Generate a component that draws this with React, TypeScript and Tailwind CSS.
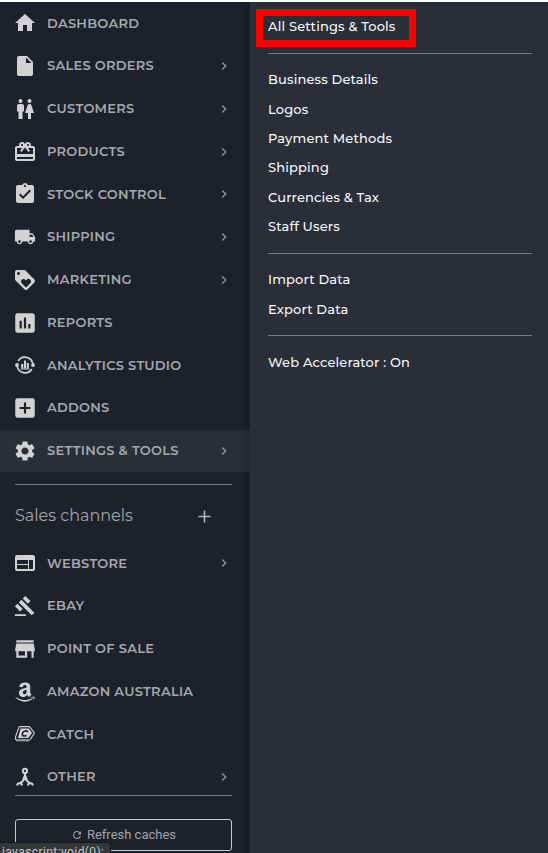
import type { ReactNode } from "react";
import {
  MdAddBox, MdAssessment, MdAssignmentTurnedIn, MdCardGiftcard, MdChevronRight, MdGavel, MdHome,
  MdInsertDriveFile, MdLocalShipping, MdLoyalty, MdRefresh, MdSettings, MdStore, MdWc, MdWeb,
} from "react-icons/md";
import { FaAmazon } from "react-icons/fa";

type Item = { label: string; icon: ReactNode; arrow?: boolean; active?: boolean };

function AnalyticsIcon() {
  return (
    <svg width="20" height="20" viewBox="0 0 20 20" fill="none" stroke="currentColor">
      <path d="M3.2 6A7.9 7.9 0 0 1 17.8 9M16.8 14A7.9 7.9 0 0 1 2.2 11" strokeWidth="1.7" />
      <path d="M7.2 13.5V9M10 13.5V5.5M12.8 13.5V8" strokeWidth="2.1" />
      <path d="M5.6 14h8.8" strokeWidth="1" />
      <circle cx="2" cy="10" r="1.9" fill="currentColor" stroke="none" />
      <circle cx="18" cy="10" r="1.9" fill="currentColor" stroke="none" />
    </svg>
  );
}

function CatchIcon() {
  return (
    <svg width="20" height="20" viewBox="0 0 20 20" fill="none" stroke="currentColor">
      <path d="M4.2 2.6H14.5L19.4 9l-4.2 6.6" strokeWidth="1.1" strokeLinejoin="round" />
      <path d="M4.2 2.6L.6 12.5V16" strokeWidth="1.1" />
      <path d="M5.6 4.5h8.2L17 9l-3.6 5H3z" fill="currentColor" stroke="none" />
      <path d="M12.9 7.8C11.4 6.4 8.4 6.7 7.5 9.2s1 3.5 4 2.2" stroke="#1e212c" strokeWidth="1.7" />
      <path d="M.9 16.2H14.6" strokeWidth="2.4" opacity="0.65" />
    </svg>
  );
}

function OtherIcon() {
  return (
    <svg width="20" height="20" viewBox="0 0 20 20" fill="none" stroke="currentColor" strokeWidth="2">
      <circle cx="10" cy="3.9" r="2.1" />
      <path d="M10 6v3M9.8 8.5L7.4 15M10.2 8.5l2.4 6.5M7.6 12.6h4.8M7.6 14.2L4.6 16.4M12.4 14.2l3 2.2" />
      <path d="M2.2 18.6a2.4 2.4 0 0 1 4.8 0M13 18.6a2.4 2.4 0 0 1 4.8 0" />
    </svg>
  );
}

const MAIN: Item[] = [
  { label: "DASHBOARD", icon: <MdHome /> },
  { label: "SALES ORDERS", icon: <MdInsertDriveFile />, arrow: true },
  { label: "CUSTOMERS", icon: <MdWc />, arrow: true },
  { label: "PRODUCTS", icon: <MdCardGiftcard />, arrow: true },
  { label: "STOCK CONTROL", icon: <MdAssignmentTurnedIn />, arrow: true },
  { label: "SHIPPING", icon: <MdLocalShipping size={22} />, arrow: true },
  { label: "MARKETING", icon: <MdLoyalty />, arrow: true },
  { label: "REPORTS", icon: <MdAssessment size={26} className="-mx-px shrink-0" /> },
  { label: "ANALYTICS STUDIO", icon: <AnalyticsIcon /> },
  { label: "ADDONS", icon: <MdAddBox size={26} className="-mx-px shrink-0" /> },
  { label: "SETTINGS & TOOLS", icon: <MdSettings />, arrow: true, active: true },
];

const CHANNELS: Item[] = [
  { label: "WEBSTORE", icon: <MdWeb />, arrow: true },
  { label: "EBAY", icon: <MdGavel size={22} /> },
  { label: "POINT OF SALE", icon: <MdStore size={26} className="-mx-px shrink-0" /> },
  { label: "AMAZON AUSTRALIA", icon: <FaAmazon preserveAspectRatio="none" className="h-[22px] w-5" /> },
  { label: "CATCH", icon: <CatchIcon /> },
  { label: "OTHER", icon: <OtherIcon />, arrow: true },
];

const GROUPS = [
  ["Business Details", "Logos", "Payment Methods", "Shipping", "Currencies & Tax", "Staff Users"],
  ["Import Data", "Export Data"],
  ["Web Accelerator : On"],
];

function NavRow({ item }: { item: Item }) {
  return (
    <li className={`flex h-[42.75px] items-center pr-[18.5px] pl-[13px] ${item.active ? "bg-linear-to-r from-[#292e39] from-95% to-[#232732]" : ""}`}>
      <span className="flex w-6 shrink-0 justify-center text-2xl text-[#d2d2d2]">{item.icon}</span>
      <span className="ml-[10px] grow text-[13px] font-semibold tracking-[0.27px] whitespace-nowrap text-[#a6a8ac]">{item.label}</span>
      {item.arrow && <MdChevronRight className="size-4 shrink-0 text-[#96989d]" />}
    </li>
  );
}

export default function App() {
  return (
    <div className="relative flex h-[853px] w-[548px] overflow-hidden border-t-2 border-[#fdfdfd] bg-[#1d212c] font-['Montserrat','Inter',sans-serif]">
      <nav className="flex w-[250px] shrink-0 flex-col bg-linear-to-r from-[#1d212c] from-95% to-[#191c26]">
        <ul>{MAIN.map((i) => <NavRow key={i.label} item={i} />)}</ul>
        <div className="mt-[11.75px] mr-[18px] ml-[15px] h-px shrink-0 bg-[#7b7c87]" />
        <div className="flex h-[57px] shrink-0 items-center justify-between pt-[5px] pr-[39px] pl-[15px] text-base text-[#a3a5aa]">
          <span>Sales channels</span>
          <svg width="13" height="13" viewBox="0 0 13 13" stroke="#b2b4b8" strokeWidth="1.6">
            <path d="M.5 6.5h12M6.5.5v12" />
          </svg>
        </div>
        <ul className="h-[253px] shrink-0">{CHANNELS.map((i) => <NavRow key={i.label} item={i} />)}</ul>
        <div className="mr-[18px] ml-[15px] h-px shrink-0 bg-[#7b7c87]" />
        <button className="mt-[23px] ml-[15px] flex h-8 w-[217px] shrink-0 items-center justify-center gap-1 rounded-[3px] border border-[#c8c9cc] font-['Roboto',sans-serif] text-[13px] text-[#a1a3a8]">
          <MdRefresh className="size-3" />
          Refresh caches
        </button>
      </nav>
      <aside className="grow bg-[#292e39] pt-[10px] pr-4 pl-[18px] text-[13px] font-medium tracking-[0.16px] text-[#f7f7f8]">
        <div className="relative flex h-[29px] items-center">
          <div className="absolute -top-[3px] -left-[12px] h-[38px] w-[160px] border-[7px] border-[#fe0000]" />
          <a className="relative">All Settings &amp; Tools</a>
        </div>
        {GROUPS.map((group, n) => (
          <ul key={n} className={`border-t border-[#7b7c87] ${n === 0 ? "mt-3 pt-[11.25px]" : "mt-[11px] pt-[11.6px]"}`}>
            {group.map((label) => (
              <li key={label} className="flex h-[29.4px] items-center">{label}</li>
            ))}
          </ul>
        ))}
      </aside>
      <div className="absolute bottom-0 left-0 h-[11px] w-[111px] overflow-hidden rounded-tr-sm border-t border-r border-[#16171c] bg-[#35363a] pt-px pl-0.5 font-['Roboto',sans-serif] text-xs leading-4 tracking-[0.4px] text-[#c7c8cc]">
        javascript:void(0);
      </div>
    </div>
  );
}
